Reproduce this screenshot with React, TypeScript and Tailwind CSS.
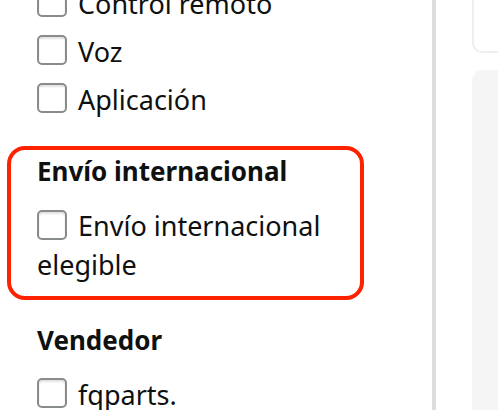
import React from "react";

function Box() {
  return (
    <span className="inline-block w-[30px] h-[30px] shrink-0 rounded-[5px] border-2 border-[#888c8c] bg-white shadow-[inset_0_2px_2px_rgba(15,17,17,0.12)]" />
  );
}

function Row({ label, first }: { label: string; first?: boolean }) {
  return (
    <div className={`flex items-start gap-[11px] h-[30px] ${first ? "-mt-[13px]" : "mt-[18px]"}`}>
      <Box />
      <span className="pt-[2px] text-[27px] leading-[30px] text-[#0f1111] whitespace-nowrap">{label}</span>
    </div>
  );
}

export default function App() {
  return (
    <div
      className="relative w-[498px] h-[410px] overflow-hidden bg-white flex"
      style={{ fontFamily: '"Noto Sans", "Open Sans", Arial, sans-serif' }}
    >
      <div className="w-[432px] shrink-0 flex flex-col">
        <div className="pl-[37px]">
          <Row label="Control remoto" first />
          <Row label="Voz" />
          <Row label="Aplicación" />
        </div>
        <div className="ml-[7px] mt-[33px] w-[357px] h-[154px] shrink-0 border-4 border-[#ff2200] rounded-[18px] pl-[26px] pt-[6px]">
          <div className="text-[26px] leading-[30px] font-bold text-[#0f1111] whitespace-nowrap">Envío internacional</div>
          <div className="mt-[24px] flex items-start gap-[11px] h-[30px]">
            <Box />
            <span className="pt-[1px] text-[27px] leading-[30px] text-[#0f1111] whitespace-nowrap">Envío internacional</span>
          </div>
          <div className="text-[27px] leading-[30px] text-[#0f1111] mt-[10px]">elegible</div>
        </div>
        <div className="pl-[37px] mt-[25px]">
          <div className="text-[26px] leading-[30px] font-bold text-[#0f1111]">Vendedor</div>
          <div className="mt-[23px] flex items-start gap-[11px] h-[30px]">
            <Box />
            <span className="pt-[2px] text-[27px] leading-[30px] text-[#0f1111]">fqparts.</span>
          </div>
        </div>
      </div>
      <div className="w-[4px] shrink-0 bg-[#dddddd]" />
      <div className="ml-[36px] flex-1 flex flex-col">
        <div className="h-[53px] border-l-2 border-b-2 border-[#eeeeee] rounded-bl-[10px]" />
        <div className="mt-[17px] flex-1 bg-[#f5f5f5] rounded-tl-[10px]" />
      </div>
    </div>
  );
}
